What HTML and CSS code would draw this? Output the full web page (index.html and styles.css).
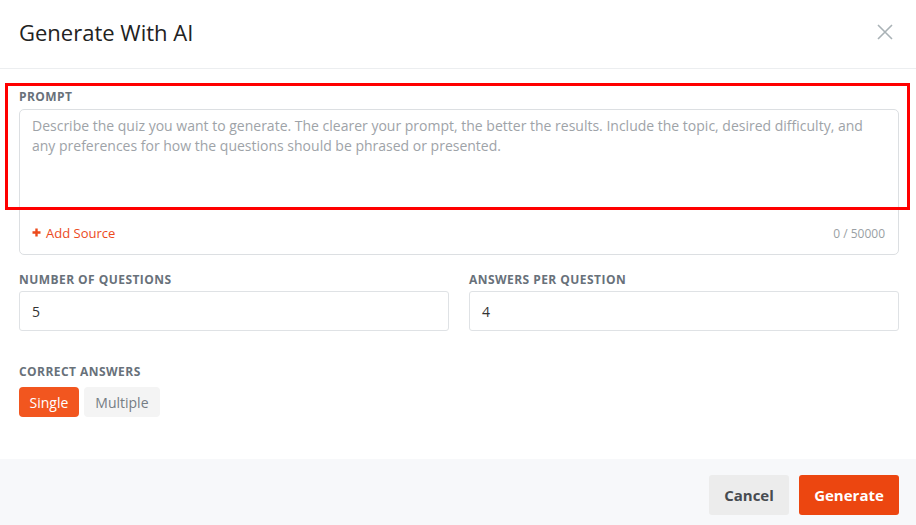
FILE: index.html
```html
<!DOCTYPE html>
<html lang="en">
<head>
<meta charset="utf-8">
<title>Generate With AI</title>
<link rel="stylesheet" href="styles.css">
</head>
<body>
<div class="modal">
  <header class="modal-header">
    <h1 class="modal-title">Generate With AI</h1>
    <button class="close-btn" aria-label="Close">
      <svg width="18" height="18" viewBox="0 0 18 18"><path d="M2 2 L16 16 M16 2 L2 16" stroke="#a9b2b6" stroke-width="1.6" fill="none"/></svg>
    </button>
  </header>
  <main class="modal-body">
    <div class="highlight"></div>
    <div class="field">
      <label class="field-label">Prompt</label>
      <div class="prompt-box">
        <textarea class="prompt-input" placeholder="Describe the quiz you want to generate. The clearer your prompt, the better the results. Include the topic, desired difficulty, and any preferences for how the questions should be phrased or presented."></textarea>
        <div class="prompt-footer">
          <span class="add-source"><svg class="plus" width="9" height="9" viewBox="0 0 9 9"><path d="M4.5 0.5 V8.5 M0.5 4.5 H8.5" stroke="#ec4a1c" stroke-width="2.4" fill="none"/></svg>Add Source</span>
          <span class="counter">0 / 50000</span>
        </div>
      </div>
    </div>
    <div class="row">
      <div class="field">
        <label class="field-label">Number of questions</label>
        <div class="text-input">5</div>
      </div>
      <div class="field">
        <label class="field-label">Answers per question</label>
        <div class="text-input">4</div>
      </div>
    </div>
    <div class="field correct">
      <label class="field-label">Correct answers</label>
      <div class="toggle">
        <button class="toggle-btn active">Single</button>
        <button class="toggle-btn multi">Multiple</button>
      </div>
    </div>
  </main>
  <footer class="modal-footer">
    <button class="btn btn-cancel">Cancel</button>
    <button class="btn btn-primary">Generate</button>
  </footer>
</div>
</body>
</html>
```
FILE: styles.css
```css
* { box-sizing: border-box; }
html, body { margin: 0; padding: 0; background: #fff; }
body { font-family: "Open Sans", "Noto Sans", sans-serif; color: #333; }
.modal { width: 916px; height: 525px; display: flex; flex-direction: column; position: relative; }
.modal-header {
  height: 69px; border-bottom: 1px solid #eceef0;
  display: flex; align-items: center; justify-content: space-between;
  padding: 0 22px 5px 19px;
}
.modal-title { margin: 0; font-size: 22px; font-weight: 400; color: #222; letter-spacing: 0; }
.close-btn { background: none; border: 0; padding: 0; width: 18px; height: 18px; display: flex; }
.modal-body { flex: 1; padding: 20px 17px 0 19px; position: relative; }
.highlight {
  position: absolute; left: 5px; top: 14px; width: 905px; height: 127px;
  border: 3px solid #ff0000; pointer-events: none;
}
.field-label {
  display: block; font-size: 12px; line-height: 16px; font-weight: 700;
  text-transform: uppercase; color: #68717a; letter-spacing: 0.45px; margin-bottom: 4px;
}
.prompt-box { border: 1px solid #dcdfe2; border-radius: 5px; height: 146px; display: flex; flex-direction: column; }
.prompt-input {
  flex: 1; border: 0; resize: none; outline: none; background: transparent;
  font-family: inherit; font-size: 14px; line-height: 20px; padding: 6px 12px; color: #333;
}
.prompt-input::placeholder { color: #9ea3a8; }
.prompt-footer { height: 42px; display: flex; align-items: center; justify-content: space-between; padding: 0 13px 0 12px; }
.add-source { color: #ec4a1c; font-size: 13px; display: flex; align-items: center; }
.plus { margin-right: 5px; margin-top: -2px; }
.counter { color: #9a9fa4; font-size: 12px; }
.row { display: grid; grid-template-columns: 1fr 1fr; gap: 20px; margin-top: 17px; }
.row .field-label { margin-bottom: 3px; }
.text-input {
  height: 40px; border: 1px solid #dfe2e5; border-radius: 3px; padding: 0 12px;
  display: flex; align-items: center; font-size: 14px; color: #333;
}
.correct { margin-top: 33px; }
.correct .field-label { margin-bottom: 7px; }
.toggle { display: flex; gap: 5px; }
.toggle-btn {
  height: 30px; border: 0; border-radius: 4px; padding: 0 10.5px;
  font-family: inherit; font-size: 14px; background: #f4f4f4; color: #767d84;
}
.toggle-btn.multi { padding: 0 11.5px; }
.toggle-btn.active { background: #f2561f; color: #fff; }
.modal-footer {
  height: 66px; background: #f7f8fa; display: flex; justify-content: flex-end; align-items: flex-start;
  gap: 10px; padding: 16px 17px 0 0;
}
.btn { height: 40px; border: 0; border-radius: 3px; font-family: inherit; font-size: 15px; font-weight: 700; }
.btn-cancel { width: 80px; background: #ececec; color: #474b50; }
.btn-primary { width: 100px; background: #ec4610; color: #fff; }
```
